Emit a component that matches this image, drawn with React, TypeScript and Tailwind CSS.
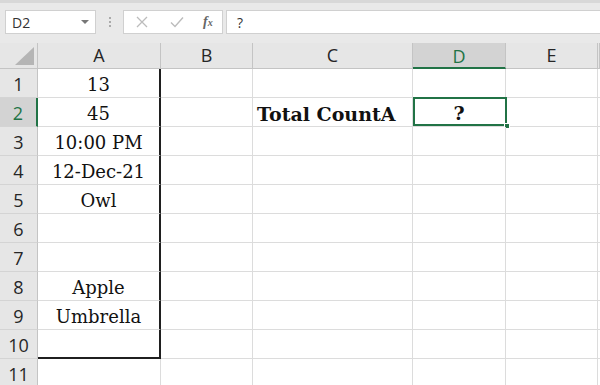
import React from "react";

const cols = ["A", "B", "C", "D", "E", ""];
const colA: Record<number, string> = {
  1: "13",
  2: "45",
  3: "10:00 PM",
  4: "12-Dec-21",
  5: "Owl",
  8: "Apple",
  9: "Umbrella",
};

const serif = { fontFamily: '"DejaVu Serif", "Liberation Serif", serif' };
const sans = { fontFamily: '"Open Sans", "Noto Sans", sans-serif' };

export default function App() {
  const rows = Array.from({ length: 11 }, (_, i) => i + 1);
  return (
    <div className="w-[600px] h-[385px] overflow-hidden bg-white">
      {/* formula bar */}
      <div className="h-[43px] bg-[#e9e9e9] border-t-[3px] border-[#d8d8d8] flex items-start pt-[7px] pl-[5px]">
        <div
          className="w-[91px] h-[24px] bg-white border border-[#d0d0d0] flex items-center justify-between pl-[6px] pr-[6px] text-[14px] text-[#333]"
          style={sans}
        >
          <span>D2</span>
          <svg width="8" height="5" viewBox="0 0 8 5">
            <polygon points="0,0 8,0 4,4" fill="#777" />
          </svg>
        </div>
        <div className="w-[27px] h-[24px] flex flex-col items-center justify-center gap-[2px]">
          <span className="w-[2px] h-[2px] bg-[#aaa]" />
          <span className="w-[2px] h-[2px] bg-[#aaa]" />
          <span className="w-[2px] h-[2px] bg-[#aaa]" />
        </div>
        <div className="w-[100px] h-[24px] bg-white border border-[#d0d0d0] flex items-center">
          <svg className="ml-[12px]" width="12" height="12" viewBox="0 0 12 12">
            <path d="M1 1 L11 11 M11 1 L1 11" stroke="#bcbcbc" strokeWidth="1.3" />
          </svg>
          <svg className="ml-[22px]" width="14" height="12" viewBox="0 0 14 12">
            <path d="M1 6.5 L5 10.5 L13 1.5" stroke="#bcbcbc" strokeWidth="1.4" fill="none" />
          </svg>
          <span
            className="ml-[19px] text-[14px] italic font-bold text-[#666] leading-none"
            style={{ fontFamily: '"Liberation Serif", serif' }}
          >
            f<span className="text-[10px]">x</span>
          </span>
        </div>
        <div
          className="ml-[3px] flex-1 h-[24px] bg-white border border-[#d0d0d0] border-r-0 flex items-center pl-[10px] text-[14px] text-[#333]"
          style={sans}
        >
          ?
        </div>
      </div>

      {/* sheet */}
      <div className="grid grid-cols-[38px_123px_92px_160px_93px_92px_1fr] grid-rows-[26px_repeat(11,29px)]">
        {/* corner */}
        <div className="bg-[#e6e6e6] border-r border-b border-[#c4c4c4] flex items-end justify-end pr-[3px] pb-[3px]">
          <svg width="19" height="18" viewBox="0 0 19 18">
            <polygon points="19,0 19,18 0,18" fill="#b5b5b5" />
          </svg>
        </div>
        {cols.map((c) => (
          <div
            key={"h" + c}
            className={
              c === "D"
                ? "bg-[#d3d3d3] border-r border-[#c4c4c4] border-b-2 border-b-[#217346] text-[#217346] flex items-center justify-center text-[18px] pt-[2px]"
                : "bg-[#e6e6e6] border-r border-b border-[#c4c4c4] text-[#262626] flex items-center justify-center text-[18px]"
            }
            style={sans}
          >
            {c}
          </div>
        ))}

        {rows.map((r) => (
          <React.Fragment key={r}>
            <div
              className={
                r === 2
                  ? "bg-[#d3d3d3] border-b border-[#d4d4d4] border-r-2 border-r-[#217346] text-[#217346] flex items-center justify-center text-[18px] pt-[3px]"
                  : "bg-[#e6e6e6] border-r border-b border-[#d4d4d4] border-r-[#c4c4c4] text-[#262626] flex items-center justify-center text-[18px] pt-[3px]"
              }
              style={sans}
            >
              {r}
            </div>
            {/* A */}
            <div
              className={
                r <= 10
                  ? r === 10
                    ? "border-r-2 border-b-2 border-[#1f1f1f] flex items-end justify-center pb-[2px] text-[18px] leading-[20px] text-[#111]"
                    : "border-r-2 border-r-[#1f1f1f] border-b border-b-[#dcdcdc] flex items-end justify-center pb-[2px] text-[18px] leading-[20px] text-[#111]"
                  : "border-r border-b border-[#dcdcdc]"
              }
              style={serif}
            >
              {colA[r] ?? ""}
            </div>
            {/* B */}
            <div className="border-r border-b border-[#dcdcdc]" />
            {/* C */}
            <div
              className="border-r border-b border-[#dcdcdc] flex items-end pl-[4px] pb-[1px] text-[19px] leading-[22px] font-bold text-[#111] whitespace-nowrap"
              style={serif}
            >
              {r === 2 ? "Total CountA" : ""}
            </div>
            {/* D */}
            <div
              className="relative border-r border-b border-[#dcdcdc] flex items-end justify-center pb-[2px] text-[19px] leading-[22px] font-bold text-[#111]"
              style={serif}
            >
              {r === 2 && (
                <>
                  ?
                  <div className="absolute left-0 top-[-1px] right-[-2px] bottom-0 border-2 border-[#217346]" />
                  <div className="absolute right-[-5px] bottom-[-3px] w-[6px] h-[6px] bg-[#217346] border border-white" />
                </>
              )}
            </div>
            {/* E */}
            <div className="border-r border-b border-[#dcdcdc]" />
            <div className="border-b border-[#dcdcdc]" />
          </React.Fragment>
        ))}
      </div>
    </div>
  );
}
